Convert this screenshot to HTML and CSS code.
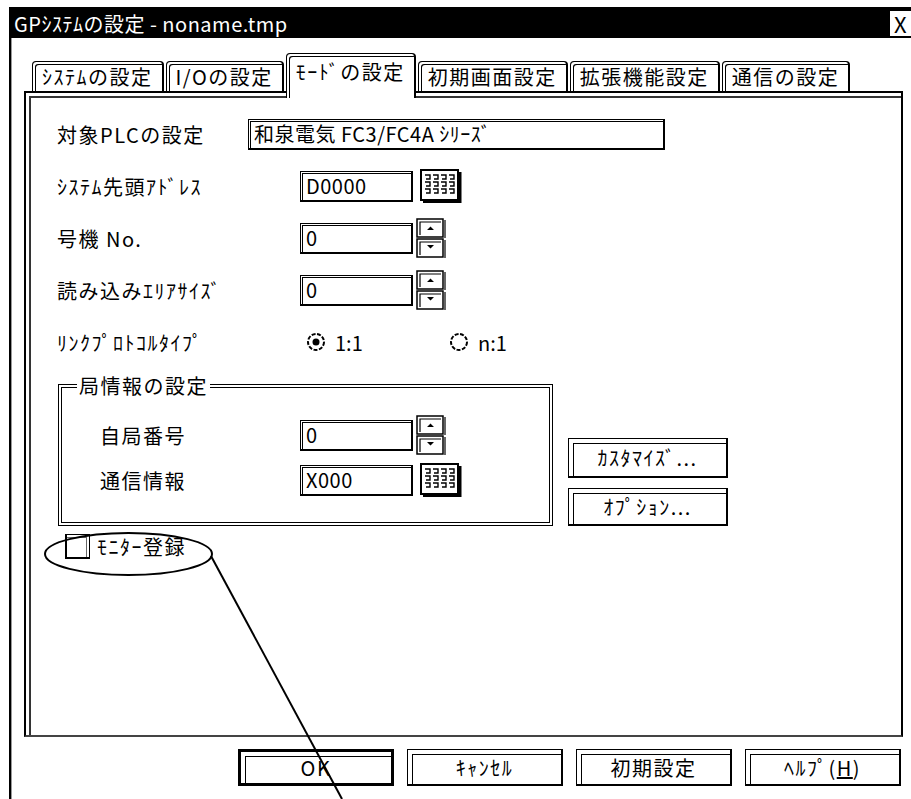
FILE: index.html
```html
<!DOCTYPE html>
<html>
<head>
    <meta charset="utf-8">
    <title>GPシステムの設定</title>
    <link rel="stylesheet" href="styles.css">
</head>
<body>
    <div class="frame">
        <div class="titlebar">
            <span class="title">GPｼｽﾃﾑの設定 - noname.tmp</span>
            <span class="close">X</span>
        </div>

        <div class="tabs">
            <div class="tab">ｼｽﾃﾑの設定</div>
            <div class="tab">I/Oの設定</div>
            <div class="tab active">ﾓｰﾄﾞの設定</div>
            <div class="tab">初期画面設定</div>
            <div class="tab">拡張機能設定</div>
            <div class="tab">通信の設定</div>
        </div>

        <div class="panel">
            <div class="row row-plc">
                <span class="label">対象PLCの設定</span>
                <div class="field field-wide">和泉電気 FC3/FC4A ｼﾘｰｽﾞ</div>
            </div>

            <div class="row">
                <span class="label">ｼｽﾃﾑ先頭ｱﾄﾞﾚｽ</span>
                <div class="field">D0000</div>
                <svg class="keypad" width="42" height="34" viewBox="0 0 42 34">
                    <rect x="1" y="1" width="37" height="30" fill="#fff" stroke="#000" stroke-width="2"/>
                    <path d="M40 3V33H3" fill="none" stroke="#000" stroke-width="3"/>
                    <path d="M5 6h5v4h-4M13 6h5v4h-4M21 6h5v4h-4M29 6h5v4h-4M5 13h5v4h-4M13 13h5v4h-4M21 13h5v4h-4M29 13h5v4h-4M5 20h5v4h-4M13 20h5v4h-4M21 20h5v4h-4M29 20h5v4h-4" fill="none" stroke="#000" stroke-width="1.4"/>
                </svg>
            </div>

            <div class="row">
                <span class="label">号機 No.</span>
                <div class="field">0</div>
                <svg class="spin" width="30" height="40" viewBox="0 0 30 40">
                    <rect x="1" y="1" width="26" height="18" fill="#fff" stroke="#000" stroke-width="1.5"/>
                    <rect x="1" y="21" width="26" height="18" fill="#fff" stroke="#000" stroke-width="1.5"/>
                    <path d="M29 2V20M29 22V40M4 17V4H25M4 37V24H25" fill="none" stroke="#000" stroke-width="1.2"/>
                    <path d="M11 12l3.5-3.5l3.5 3.5z M11 27l3.5 3.5l3.5-3.5z" fill="#000"/>
                </svg>
            </div>

            <div class="row">
                <span class="label">読み込みｴﾘｱｻｲｽﾞ</span>
                <div class="field">0</div>
                <svg class="spin" width="30" height="40" viewBox="0 0 30 40">
                    <rect x="1" y="1" width="26" height="18" fill="#fff" stroke="#000" stroke-width="1.5"/>
                    <rect x="1" y="21" width="26" height="18" fill="#fff" stroke="#000" stroke-width="1.5"/>
                    <path d="M29 2V20M29 22V40M4 17V4H25M4 37V24H25" fill="none" stroke="#000" stroke-width="1.2"/>
                    <path d="M11 12l3.5-3.5l3.5 3.5z M11 27l3.5 3.5l3.5-3.5z" fill="#000"/>
                </svg>
            </div>

            <div class="row">
                <span class="label">ﾘﾝｸﾌﾟﾛﾄｺﾙﾀｲﾌﾟ</span>
                <div class="radio radio-first">
                    <svg width="22" height="22" viewBox="0 0 22 22">
                        <circle cx="11" cy="11" r="8" fill="none" stroke="#000" stroke-width="2" stroke-dasharray="4 1.5"/>
                        <circle cx="11" cy="11" r="3.5" fill="#000"/>
                    </svg>
                    <span>1:1</span>
                </div>
                <div class="radio">
                    <svg width="22" height="22" viewBox="0 0 22 22">
                        <circle cx="11" cy="11" r="8" fill="none" stroke="#000" stroke-width="2" stroke-dasharray="4 1.5"/>
                    </svg>
                    <span>n:1</span>
                </div>
            </div>

            <div class="group-wrap">
                <fieldset class="group">
                    <legend>局情報の設定</legend>
                    <div class="row">
                        <span class="label">自局番号</span>
                        <div class="field">0</div>
                        <svg class="spin" width="30" height="40" viewBox="0 0 30 40">
                            <rect x="1" y="1" width="26" height="18" fill="#fff" stroke="#000" stroke-width="1.5"/>
                            <rect x="1" y="21" width="26" height="18" fill="#fff" stroke="#000" stroke-width="1.5"/>
                            <path d="M29 2V20M29 22V40M4 17V4H25M4 37V24H25" fill="none" stroke="#000" stroke-width="1.2"/>
                            <path d="M11 12l3.5-3.5l3.5 3.5z M11 27l3.5 3.5l3.5-3.5z" fill="#000"/>
                        </svg>
                    </div>
                    <div class="row">
                        <span class="label">通信情報</span>
                        <div class="field">X000</div>
                        <svg class="keypad" width="42" height="34" viewBox="0 0 42 34">
                            <rect x="1" y="1" width="37" height="30" fill="#fff" stroke="#000" stroke-width="2"/>
                            <path d="M40 3V33H3" fill="none" stroke="#000" stroke-width="3"/>
                            <path d="M5 6h5v4h-4M13 6h5v4h-4M21 6h5v4h-4M29 6h5v4h-4M5 13h5v4h-4M13 13h5v4h-4M21 13h5v4h-4M29 13h5v4h-4M5 20h5v4h-4M13 20h5v4h-4M21 20h5v4h-4M29 20h5v4h-4" fill="none" stroke="#000" stroke-width="1.4"/>
                        </svg>
                    </div>
                </fieldset>
                <div class="side-buttons">
                    <button class="btn btn-side">ｶｽﾀﾏｲｽﾞ...</button>
                    <button class="btn btn-side short">ｵﾌﾟｼｮﾝ...</button>
                </div>
            </div>

            <div class="check">
                <span class="check-box"></span>
                <span>ﾓﾆﾀｰ登録</span>
            </div>
        </div>

        <div class="actions">
            <button class="btn default">OK</button>
            <button class="btn">ｷｬﾝｾﾙ</button>
            <button class="btn">初期設定</button>
            <button class="btn">ﾍﾙﾌﾟ(<u>H</u>)</button>
        </div>
    </div>

    <svg class="callout" width="911" height="799" viewBox="0 0 911 799">
        <ellipse cx="128.5" cy="554" rx="83.5" ry="21" fill="none" stroke="#000" stroke-width="2"/>
        <line x1="211" y1="556" x2="342" y2="799" stroke="#000" stroke-width="2"/>
    </svg>
</body>
</html>
```

FILE: styles.css
```css
body {
    margin: 0;
    width: 911px;
    height: 799px;
    overflow: hidden;
    position: relative;
    background: #fff;
    color: #000;
    font-family: "Noto Sans CJK JP", "Noto Sans", sans-serif;
    font-size: 20px;
}
.frame {
    margin: 7px 0 0 9px;
    height: 792px;
    box-sizing: border-box;
    border-top: 2px solid #000;
    border-left: 2px solid #000;
    box-shadow: inset 1px 0 0 #999;
}
.titlebar {
    height: 29px;
    background: #000;
    color: #fff;
    display: flex;
    justify-content: space-between;
    align-items: center;
    padding-left: 3px;
    letter-spacing: 0.5px;
}
.close {
    width: 21px;
    height: 25px;
    background: #fff;
    color: #000;
    border-left: 2px solid #000;
    border-bottom: 1px solid #000;
    display: flex;
    align-items: center;
    justify-content: center;
    font-size: 22px;
    line-height: 1;
}
.tabs {
    display: flex;
    align-items: flex-end;
    gap: 2px;
    height: 53px;
    padding-left: 21px;
}
.tab {
    height: 30px;
    box-sizing: border-box;
    padding: 0 9px;
    border: 1px solid #000;
    border-right-width: 2px;
    border-bottom: none;
    border-radius: 4px 4px 0 0;
    box-shadow: inset 2px 2px 0 #fff, inset 3px 3px 0 #000;
    display: flex;
    align-items: center;
    letter-spacing: 1.5px;
    line-height: 1;
    background: #fff;
}
.tab.active {
    height: 45px;
    margin-bottom: -7px;
    padding-bottom: 9px;
    position: relative;
    z-index: 1;
}
.panel {
    margin-left: 13px;
    width: 879px;
    height: 646px;
    box-sizing: border-box;
    border: 2px solid #000;
    border-bottom-color: #444;
    box-shadow: inset 3px 3px 0 #fff, inset 5px 5px 0 #333;
    padding: 21px 0 0 31px;
}
.row {
    display: flex;
    align-items: center;
    height: 40px;
    margin-bottom: 12px;
}
.label {
    width: 243px;
    flex: none;
    letter-spacing: 1.5px;
}
.row-plc .label {
    width: 191px;
}
.field {
    width: 113px;
    height: 31px;
    box-sizing: border-box;
    border: 1px solid #000;
    border-right-width: 2px;
    border-bottom-width: 2px;
    box-shadow: inset 1px 1px 0 #fff, inset 2px 2px 0 #000;
    padding-left: 5px;
    display: flex;
    align-items: center;
    letter-spacing: 0.5px;
    flex: none;
}
.field-wide {
    width: 417px;
}
.keypad {
    margin-left: 7px;
}
.spin {
    margin-left: 3px;
}
.radio {
    display: flex;
    align-items: center;
    gap: 8px;
}
.radio-first {
    width: 143px;
    margin-left: 5px;
}
.group-wrap {
    display: flex;
    align-items: flex-end;
    margin-top: 4px;
}
.group {
    margin: 0 0 0 1px;
    width: 495px;
    box-sizing: border-box;
    border: 4px double #000;
    padding: 17px 0 22px 15px;
}
.group legend {
    padding: 0 2px;
    line-height: 24px;
    letter-spacing: 1.5px;
}
.group .row {
    margin: 0 0 5px 23px;
}
.group .row:last-child {
    margin-bottom: 0;
}
.group .label {
    width: 200px;
}
.side-buttons {
    display: flex;
    flex-direction: column;
    gap: 10px;
    margin-left: 15px;
}
.btn {
    width: 156px;
    height: 37px;
    box-sizing: border-box;
    padding: 0;
    background: #fff;
    color: #000;
    font: inherit;
    letter-spacing: 1.5px;
    border: 1px solid #000;
    border-right-width: 2px;
    border-bottom-width: 2px;
    box-shadow: inset 4px 4px 0 #fff, inset 5px 5px 0 #000;
    display: flex;
    align-items: center;
    justify-content: center;
}
.btn-side {
    width: 160px;
    height: 40px;
}
.btn-side.short {
    height: 38px;
}
.btn.default {
    border-width: 3px;
}
.check {
    display: flex;
    align-items: center;
    gap: 7px;
    height: 25px;
    margin: 8px 0 0 8px;
    letter-spacing: 1.5px;
}
.check-box {
    width: 25px;
    height: 25px;
    box-sizing: border-box;
    border: 1px solid #000;
    border-left-width: 2px;
    border-bottom-width: 2px;
    box-shadow: inset -2px 2px 0 #fff, inset -3px 3px 0 #666;
}
.actions {
    display: flex;
    justify-content: flex-end;
    gap: 13px;
    margin-top: 12px;
    padding-right: 10px;
}
.callout {
    position: absolute;
    top: 0;
    left: 0;
    pointer-events: none;
}
```
